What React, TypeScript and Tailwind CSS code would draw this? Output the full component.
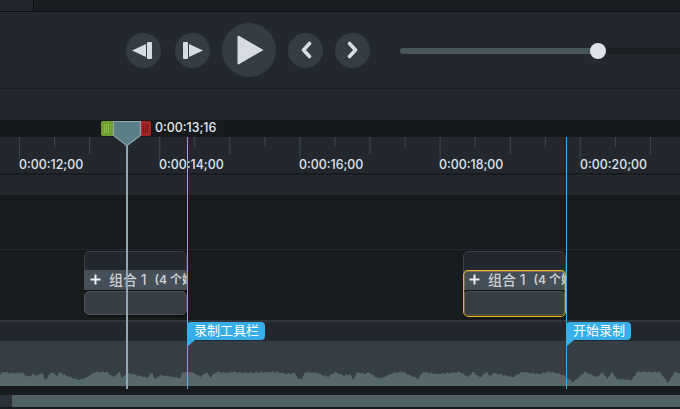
const FONT = "font-['Inter','Noto_Sans_CJK_SC',sans-serif]";

/**
 * Waveform top edge read off the reference, as [x, y] in the 680x45 svg box
 */
const WAVE: [number, number][] = [
  [0, 34], [3, 31], [10, 32], [17, 32], [23, 32], [28, 36], [33, 33], [37, 35], [42, 32], [45, 39],
  [52, 31], [57, 35], [60, 31], [67, 35], [73, 37], [80, 39], [87, 36], [95, 31], [107, 31], [113, 36],
  [120, 31], [122, 37], [127, 32], [140, 35], [148, 37], [152, 31], [155, 38], [160, 34], [180, 37], [183, 31],
  [193, 31], [200, 36], [207, 31], [210, 36], [217, 31], [227, 32], [233, 31], [247, 32], [267, 31], [277, 31],
  [287, 33], [295, 32], [298, 38], [302, 38], [305, 31], [317, 32], [328, 36], [335, 31], [340, 33], [345, 35],
  [350, 33], [353, 39], [357, 31], [365, 33], [368, 31], [378, 37], [383, 37], [390, 33], [398, 31], [403, 31],
  [418, 38], [423, 31], [437, 33], [460, 31], [468, 36], [473, 31], [480, 36], [487, 31], [490, 36], [493, 32],
  [513, 36], [522, 31], [540, 33], [547, 31], [553, 31], [563, 34], [573, 41], [585, 31], [597, 36], [603, 31],
  [607, 38], [612, 31], [617, 38], [632, 39], [637, 31], [660, 31], [668, 42], [675, 31], [680, 32],
];

/**
 * Builds the outline, adding a small fixed jitter between the read-off points
 */
function wavePath() {
  let d = 'M0 45';
  WAVE.forEach(([x, y], i) => {
    const next = WAVE[i + 1];
    d += ` L${x} ${y}`;
    if (!next) return;
    for (let px = x + 1; px < next[0]; px += 1) {
      const t = (px - x) / (next[0] - x);
      const jitter = Math.sin(px * 2.3) * 0.7 + Math.sin(px * 5.1) * 0.5;
      d += ` L${px} ${(y + (next[1] - y) * t + jitter).toFixed(1)}`;
    }
  });
  return d + ' L680 45 Z';
}

/**
 * Ruler ticks, every 35px with a long one each 140px
 */
function RulerTicks() {
  const ticks = [];
  for (let i = 0; i < 19; i++) {
    const x = 19.5 + i * 35.05;
    const h = i % 4 === 0 ? 22 : i % 2 === 0 ? 17 : 10;
    ticks.push(<line key={i} x1={x} x2={x} y1={0} y2={h} stroke="#3d434a" strokeWidth="1.2" />);
  }
  return (
    <svg width="680" height="22" className="absolute left-0 top-0">
      {ticks}
    </svg>
  );
}

function RoundButton({ children, big }: { children: React.ReactNode; big?: boolean }) {
  return (
    <div
      className={`flex items-center justify-center rounded-full bg-[#353d44] ${
        big ? 'h-[54px] w-[54px]' : 'h-[35px] w-[35px]'
      }`}
    >
      {children}
    </div>
  );
}

function Controls() {
  return (
    <div className="flex h-[76px] items-center bg-[#23282f] pl-[126px]">
      <div className="flex items-center gap-3">
        <RoundButton>
          <svg width="20" height="17" viewBox="0 0 20 17" fill="#d7dbe3" className="-ml-[3px]">
            <path d="M0 8.5 L14 2 V15 Z" />
            <rect x="15" y="0" width="5" height="17" rx="1" />
          </svg>
        </RoundButton>
        <div className="ml-0.5">
          <RoundButton>
            <svg width="20" height="17" viewBox="0 0 20 17" fill="#d7dbe3" className="ml-[1px]">
              <rect x="0" y="0" width="5" height="17" rx="1" />
              <path d="M6 2 L20 8.5 L6 15 Z" />
            </svg>
          </RoundButton>
        </div>
        <RoundButton big>
          <svg width="27" height="30" viewBox="0 0 27 30" fill="#d7dbe3" className="ml-[3px]">
            <path d="M1.5 0.5 Q0.5 0.5 0.5 2 V28 Q0.5 29.5 1.5 29.5 L26.5 15 Z" />
          </svg>
        </RoundButton>
        <RoundButton>
          <svg width="14" height="18" viewBox="0 0 14 18" fill="none" stroke="#d7dbe3" strokeWidth="3.6" strokeLinecap="round" strokeLinejoin="round">
            <path d="M10.5 2.5 L4.5 9 L10.5 15.5" />
          </svg>
        </RoundButton>
        <RoundButton>
          <svg width="14" height="18" viewBox="0 0 14 18" fill="none" stroke="#d7dbe3" strokeWidth="3.6" strokeLinecap="round" strokeLinejoin="round">
            <path d="M3.5 2.5 L9.5 9 L3.5 15.5" />
          </svg>
        </RoundButton>
      </div>
      <div className="ml-[30px] mt-[2px] flex flex-1 items-center">
        <div className="h-1.5 w-[192px] shrink-0 rounded-l-full bg-[#465659]" />
        <div className="z-10 -ml-[2px] h-4 w-4 shrink-0 rounded-full bg-[#dfe2e9]" />
        <div className="-ml-[2px] h-1.5 flex-1 bg-[#1c2023]" />
      </div>
    </div>
  );
}

function Clip({ selected }: { selected?: boolean }) {
  return (
    <div className="relative h-[66px] w-[103px] overflow-hidden rounded-[5px] bg-[#101316]">
      <div className="h-[24px] rounded-t-[5px] border border-b-0 border-[#3b4047] bg-[#23272e]" />
      <div className="absolute inset-x-0 top-[19px] flex h-[20px] items-center whitespace-nowrap bg-[#454f57] pb-px pl-[6px] text-[#c9ced5]">
        <svg width="11" height="11" viewBox="0 0 11 11" stroke="#eef0f3" strokeWidth="2" className="shrink-0">
          <path d="M5.5 0.5 V10.5 M0.5 5.5 H10.5" />
        </svg>
        <span className="ml-[8px] text-[14px] font-medium leading-none">组合 1</span>
        <span className="ml-[8px] text-[12px] font-semibold leading-none">(4 个媒体)</span>
      </div>
      <div className="absolute inset-x-0 top-[40px] h-[24px] rounded-[5px] border border-[#4a5159] bg-[#363d45]" />
      {selected && (
        <div className="absolute inset-x-0 bottom-0 top-[19px] rounded-[5px] border border-[#eab42a] shadow-[inset_0_0_0_1px_rgba(234,180,42,0.3)]" />
      )}
    </div>
  );
}

function Marker({ label, left }: { label: string; left: string }) {
  return (
    <div className={`absolute top-[322px] ${left}`}>
      <div className="flex h-[18px] items-center rounded-[4px] rounded-bl-none bg-[#36aeea] pb-[2px] pl-[7px] pr-[6px] text-[13px] leading-none text-white">
        {label}
      </div>
      <svg width="8" height="7" className="block">
        <path d="M0 0 H8 L0 7 Z" fill="#36aeea" />
      </svg>
    </div>
  );
}

function Grip({ color }: { color: string }) {
  return (
    <svg width="6" height="9" fill={color}>
      <rect x="0" width="1" height="9" />
      <rect x="2" width="1" height="9" />
      <rect x="4" width="1" height="9" />
    </svg>
  );
}

/**
 * Timeline editor strip: playback controls, ruler, tracks and waveform
 */
export default function App() {
  const rulerLabel = 'absolute top-[22px] text-[12.4px] font-medium leading-none text-[#dfe3e9]';
  return (
    <div className={`relative h-[409px] w-[680px] overflow-hidden bg-[#171b1e] ${FONT}`}>
      {/* top strip */}
      <div className="flex h-[12px] border-b border-[#0b0d0f] bg-[#1a1d21]">
        <div className="w-[34px] border-r border-[#0b0d0f] bg-[#23282f]" />
      </div>

      <Controls />
      <div className="h-[32px] border-t border-[#191c20] bg-[#23282f]" />

      {/* playhead time row */}
      <div className="flex h-[17px] items-center bg-[#161a1d] pl-[155px] text-[12.4px] font-medium leading-none text-[#e4e8ee]">
        0:00:13;16
      </div>

      {/* ruler */}
      <div className="relative h-[36px] bg-[#23282f]">
        <RulerTicks />
        <div className={`${rulerLabel} left-[19px]`}>0:00:12;00</div>
        <div className={`${rulerLabel} left-[159px]`}>0:00:14;00</div>
        <div className={`${rulerLabel} left-[299px]`}>0:00:16;00</div>
        <div className={`${rulerLabel} left-[439px]`}>0:00:18;00</div>
        <div className={`${rulerLabel} left-[580px]`}>0:00:20;00</div>
      </div>
      <div className="h-[22px] border-t-2 border-[#191c20] bg-[#23282f]" />

      {/* empty track */}
      <div className="h-[55px] border-b border-[#23282f] bg-[#171b1e]" />

      {/* clip track */}
      <div className="flex h-[72px] border-b-2 border-[#2f343a] bg-[#171b1e] pt-[1px]">
        <div className="ml-[84px]">
          <Clip />
        </div>
        <div className="ml-[276px]">
          <Clip selected />
        </div>
      </div>

      {/* marker track */}
      <div className="h-[19px] bg-[#23282f]" />
      <div className="relative h-[45px] bg-[#363e45]">
        <svg width="680" height="45" className="absolute left-0 top-0">
          <path d={wavePath()} fill="#56686c" />
        </svg>
      </div>
      <div className="h-[9px] bg-[#171b1e]" />

      {/* scrollbar */}
      <div className="flex h-[12px]">
        <div className="w-[12px] bg-[#2b3138]" />
        <div className="flex-1 bg-[#4f6163]" />
      </div>

      {/* lines over tracks */}
      <div className="absolute left-[187px] top-[137px] h-[252px] w-px bg-[#5fb2e2]" />
      <div className="absolute left-[566px] top-[137px] h-[252px] w-px bg-[#36aeea]" />
      <div className="absolute left-[126px] top-[145px] h-[244px] w-[2px] bg-[#8fa6b4]" />

      <Marker label="录制工具栏" left="left-[187px]" />
      <Marker label="开始录制" left="left-[566px]" />

      {/* playhead */}
      <div className="absolute left-[101px] top-[121px] flex h-[15px] w-[12px] items-center justify-center rounded-l-[2px] bg-[#6fa030]">
        <Grip color="#8ab84a" />
      </div>
      <div className="absolute left-[141px] top-[121px] flex h-[15px] w-[10px] items-center justify-center rounded-r-[2px] bg-[#a32528]">
        <Grip color="#7c1a1c" />
      </div>
      <svg width="30" height="27" className="absolute left-[112px] top-[120px]">
        <path d="M1.5 1.5 H28.5 V15.5 L15 25.5 L1.5 15.5 Z" fill="#5b7f87" stroke="#8fa6ac" strokeWidth="1.2" />
      </svg>
    </div>
  );
}
